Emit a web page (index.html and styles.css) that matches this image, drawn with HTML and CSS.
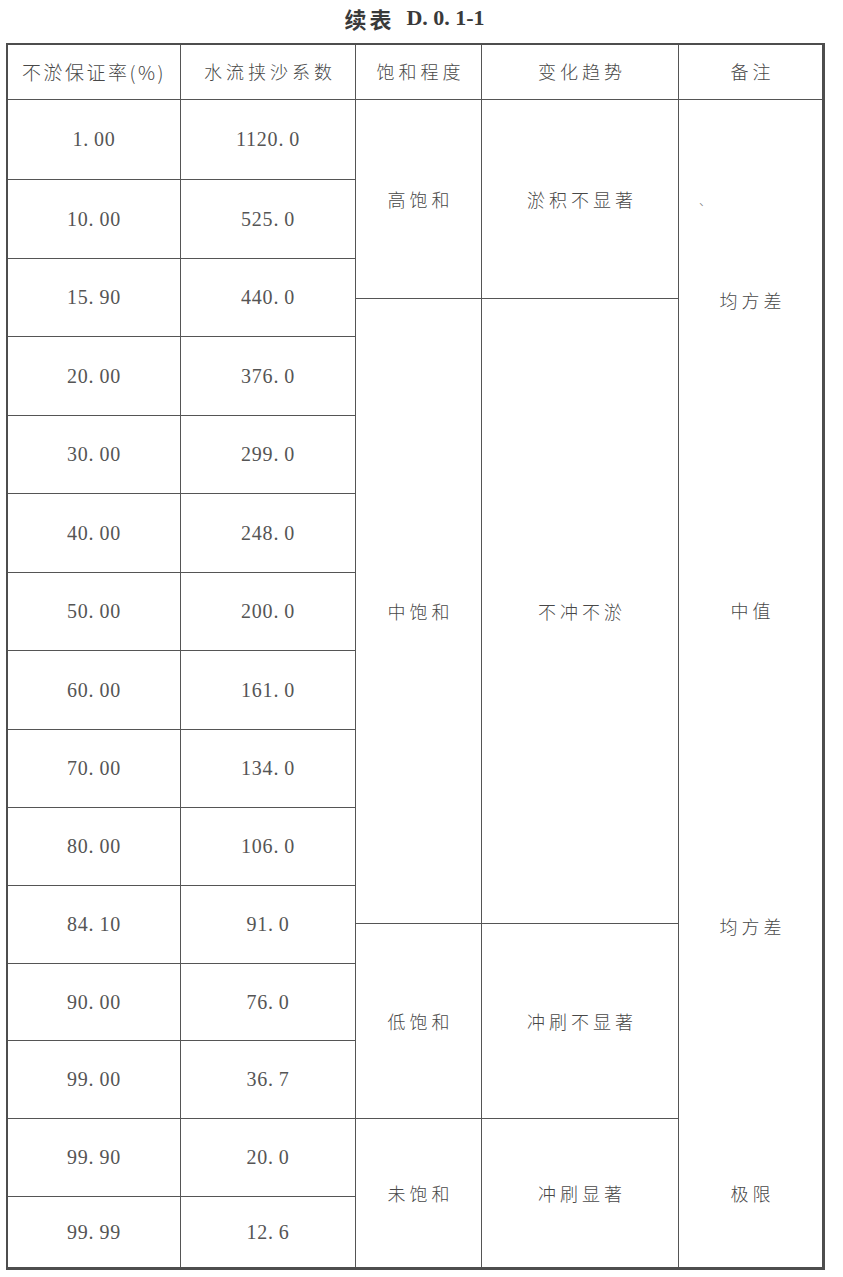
FILE: index.html
```html
<!DOCTYPE html>
<html lang="zh">
<head>
<meta charset="utf-8">
<title>续表 D.0.1-1</title>
<link rel="stylesheet" href="styles.css">
</head>
<body>
<div class="page">
  <h1 class="title"><span class="title-cjk">续表</span><span class="title-lat">D. 0. 1-1</span></h1>
  <div class="table">
    <div class="thead">
      <div class="th th-narrow">不淤保证率(%)</div>
      <div class="th">水流挟沙系数</div>
      <div class="th">饱和程度</div>
      <div class="th">变化趋势</div>
      <div class="th th-last">备注</div>
    </div>
    <div class="tbody">
      <div class="grid-left">
        <div class="td num">1<span class="pt">.</span>00</div><div class="td num">1120<span class="pt">.</span>0</div>
        <div class="td num">10<span class="pt">.</span>00</div><div class="td num">525<span class="pt">.</span>0</div>
        <div class="td num">15<span class="pt">.</span>90</div><div class="td num">440<span class="pt">.</span>0</div>
        <div class="td num">20<span class="pt">.</span>00</div><div class="td num">376<span class="pt">.</span>0</div>
        <div class="td num">30<span class="pt">.</span>00</div><div class="td num">299<span class="pt">.</span>0</div>
        <div class="td num">40<span class="pt">.</span>00</div><div class="td num">248<span class="pt">.</span>0</div>
        <div class="td num">50<span class="pt">.</span>00</div><div class="td num">200<span class="pt">.</span>0</div>
        <div class="td num">60<span class="pt">.</span>00</div><div class="td num">161<span class="pt">.</span>0</div>
        <div class="td num">70<span class="pt">.</span>00</div><div class="td num">134<span class="pt">.</span>0</div>
        <div class="td num">80<span class="pt">.</span>00</div><div class="td num">106<span class="pt">.</span>0</div>
        <div class="td num">84<span class="pt">.</span>10</div><div class="td num">91<span class="pt">.</span>0</div>
        <div class="td num">90<span class="pt">.</span>00</div><div class="td num">76<span class="pt">.</span>0</div>
        <div class="td num">99<span class="pt">.</span>00</div><div class="td num">36<span class="pt">.</span>7</div>
        <div class="td num">99<span class="pt">.</span>90</div><div class="td num">20<span class="pt">.</span>0</div>
        <div class="td num">99<span class="pt">.</span>99</div><div class="td num">12<span class="pt">.</span>6</div>
      </div>
      <div class="grid-mid">
        <div class="td cjk">高饱和</div><div class="td cjk">淤积不显著</div>
        <div class="td cjk">中饱和</div><div class="td cjk">不冲不淤</div>
        <div class="td cjk">低饱和</div><div class="td cjk">冲刷不显著</div>
        <div class="td cjk">未饱和</div><div class="td cjk">冲刷显著</div>
      </div>
      <div class="notes">
        <div class="note note-a"><span class="mark">、</span></div>
        <div class="note note-b">均方差</div>
        <div class="note note-c">中值</div>
        <div class="note note-d">均方差</div>
        <div class="note note-e"></div>
        <div class="note note-f">极限</div>
      </div>
    </div>
  </div>
</div>
</body>
</html>
```

FILE: styles.css
```css
* { box-sizing: border-box; }

html, body {
  margin: 0;
  padding: 0;
  background: #ffffff;
}

body {
  width: 843px;
  height: 1277px;
  overflow: hidden;
  color: #484848;
  font-family: "Noto Sans CJK SC", "Liberation Serif", sans-serif;
  font-weight: 300;
}

.page {
  display: flex;
  flex-direction: column;
}

.title {
  margin: 0;
  height: 43px;
  padding-bottom: 7px;
  padding-right: 14px;
  display: flex;
  align-items: center;
  justify-content: center;
  gap: 12px;
  font-size: 22px;
  font-weight: 700;
  color: #3a3a3a;
}

.title-cjk {
  font-family: "Noto Sans CJK SC", sans-serif;
  letter-spacing: 3px;
}

.title-lat {
  font-family: "Liberation Serif", serif;
  font-size: 22px;
}

.table {
  margin-left: 6px;
  width: 819px;
  border-top: 2px solid #4e4e4e;
  border-left: 2px solid #4e4e4e;
  border-right: 3px solid #4e4e4e;
  border-bottom: 3px solid #4e4e4e;
  display: flex;
  flex-direction: column;
}

.thead {
  display: grid;
  grid-template-columns: 173px 175px 126px 197px 143px;
  height: 55px;
  border-bottom: 1px solid #555555;
}

.th {
  display: flex;
  align-items: center;
  justify-content: center;
  border-right: 1px solid #555555;
  font-size: 18px;
  letter-spacing: 4px;
  padding-left: 4px;
  padding-bottom: 2px;
}

.th-narrow {
  font-size: 19px;
  letter-spacing: 2.5px;
  padding-left: 0;
}

.th-last {
  border-right: none;
}

.tbody {
  display: flex;
  height: 1167px;
}

.grid-left {
  width: 348px;
  display: grid;
  grid-template-columns: 173px 175px;
  grid-template-rows: 80px 79px 78px 79px 78px 79px 78px 79px 78px 78px 78px 77px 78px 78px 70px;
}

.grid-mid {
  width: 323px;
  display: grid;
  grid-template-columns: 126px 197px;
  grid-template-rows: 199px 625px 195px 148px;
}

.td {
  display: flex;
  align-items: center;
  justify-content: center;
  border-right: 1px solid #555555;
  border-bottom: 1px solid #555555;
}

.grid-left .td:nth-last-child(-n+2),
.grid-mid .td:nth-last-child(-n+2) {
  border-bottom: none;
}

.num {
  font-family: "Liberation Serif", serif;
  font-weight: 400;
  font-size: 20px;
  letter-spacing: 0.8px;
  color: #555555;
}

.pt {
  padding-right: 5px;
}

.cjk {
  font-size: 18px;
  letter-spacing: 4px;
  padding-left: 4px;
}

.notes {
  width: 143px;
  display: flex;
  flex-direction: column;
}

.note {
  display: flex;
  align-items: center;
  justify-content: center;
  font-size: 18px;
  letter-spacing: 4px;
  padding-left: 4px;
}

.note-a {
  height: 160px;
  align-items: flex-start;
  justify-content: flex-start;
  padding-left: 20px;
  padding-top: 92px;
}

.mark {
  font-size: 12px;
  color: #777777;
}

.note-b { height: 80px; }
.note-c { height: 540px; }
.note-d { height: 92px; }
.note-e { height: 146px; }
.note-f { height: 149px; }
```
